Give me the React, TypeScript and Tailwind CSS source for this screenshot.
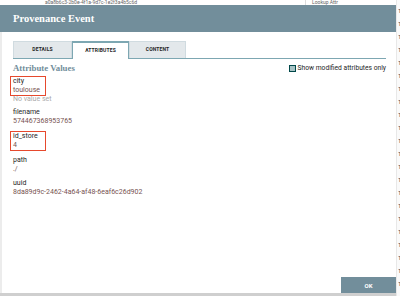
import React from "react";

const bgRows = [8, 21, 34, 47, 60, 73, 86, 99, 112, 125, 138, 151, 164, 177, 190, 203, 216, 229, 242, 255, 268, 281];

function Attr({ name, value, boxed, extra }: { name: string; value: string; boxed?: boolean; extra?: string }) {
  return (
    <div className="flex flex-col items-start">
      <div className={boxed ? "border border-[#e6492d] w-[36px] pl-[2px] -ml-[3px]" : ""}>
        <div className="text-[7px] leading-[9px] text-[#262626] whitespace-nowrap">{name}</div>
        <div className="text-[7px] leading-[9px] text-[#775351] whitespace-nowrap">{value}</div>
      </div>
      {extra && <div className="text-[7px] leading-[8px] text-[#aaaaaa] -mt-[1px]">{extra}</div>}
    </div>
  );
}

export default function App() {
  return (
    <div className="relative w-[400px] h-[296px] overflow-hidden bg-white" style={{ fontFamily: "Roboto, 'Liberation Sans', sans-serif" }}>
      {/* background table */}
      <div className="absolute inset-0">
        <div className="absolute left-[45px] top-0 text-[5px] leading-[5px] text-[#666] whitespace-nowrap">a0a8b6c3-2b0e-4f1a-9d7c-1e2f3a4b5c6d</div>
        <div className="absolute left-[305px] top-0 h-[5px] border-l border-[#ddd]" />
        <div className="absolute left-[312px] top-0 text-[5px] leading-[5px] text-[#666] whitespace-nowrap">Lookup Attr</div>
        <div className="absolute left-[396px] top-0 bottom-0 w-[4px] bg-[#fafafa] border-l border-[#e8e8e8]">
          {bgRows.map((y) => (
            <div key={y} className="absolute left-[1px] text-[6px] leading-[6px] text-[#444]" style={{ top: y }}>1</div>
          ))}
        </div>
        <div className="absolute left-0 top-[293px] w-[396px] h-[3px] bg-[#cfcfcf]" />
      </div>

      {/* dialog */}
      <div className="absolute left-0 top-[5px] w-[396px] h-[288px] bg-white flex flex-col">
        <div className="h-[27px] bg-[#728e9b] flex items-center px-[13px] shrink-0">
          <span className="text-white font-bold text-[10.5px]" style={{ fontFamily: "'Liberation Serif', 'DejaVu Serif', serif" }}>Provenance Event</span>
        </div>
        <div className="flex-1 flex flex-col border-l-2 border-[#ececec] relative">
          <div className="mt-[9px] ml-[11px] mr-[10px] flex border-b border-[#7da7b2] h-[18px]">
            <div className="w-[59px] bg-[#e3e8eb] border border-[#d0dbe0] border-b-0 flex items-center justify-center text-[5px] font-bold text-[#262626] tracking-wide">DETAILS</div>
            <div className="w-[57px] bg-white border-t-[2px] border-[#7da7b2] border-x border-x-[#7da7b2] flex items-center justify-center text-[5px] font-bold text-[#262626] -mb-px tracking-wide">ATTRIBUTES</div>
            <div className="w-[57px] bg-[#e3e8eb] border border-[#d0dbe0] border-b-0 flex items-center justify-center text-[5px] font-bold text-[#262626] tracking-wide">CONTENT</div>
          </div>
          <div className="pl-[11px] pr-[10px] pt-[3px] flex items-start justify-between">
            <div className="text-[8.8px] text-[#728e9b] leading-[12px]" style={{ fontFamily: "'Liberation Serif', 'DejaVu Serif', serif", fontWeight: 600 }}>Attribute Values</div>
            <div className="flex items-center gap-[2px] mt-[1px]">
              <div className="w-[7px] h-[7px] border-[1.5px] border-[#004849] bg-[#a8c3c5]" />
              <span className="text-[6.7px] text-[#262626]">Show modified attributes only</span>
            </div>
          </div>
          <div className="pl-[11px] pt-[2px] flex flex-col gap-[5px]">
            <Attr name="city" value="toulouse" boxed extra="No value set" />
            <Attr name="filename" value="574467368953765" />
            <Attr name="id_store" value="4" boxed />
            <Attr name="path" value="./" />
            <Attr name="uuid" value="8da89d9c-2462-4a64-af48-6eaf6c26d902" />
          </div>
          <div className="mt-auto flex justify-end">
            <div className="w-[55px] h-[16px] bg-[#728e9b] flex items-center justify-center text-white text-[6px] font-bold">OK</div>
          </div>
        </div>
      </div>
    </div>
  );
}
